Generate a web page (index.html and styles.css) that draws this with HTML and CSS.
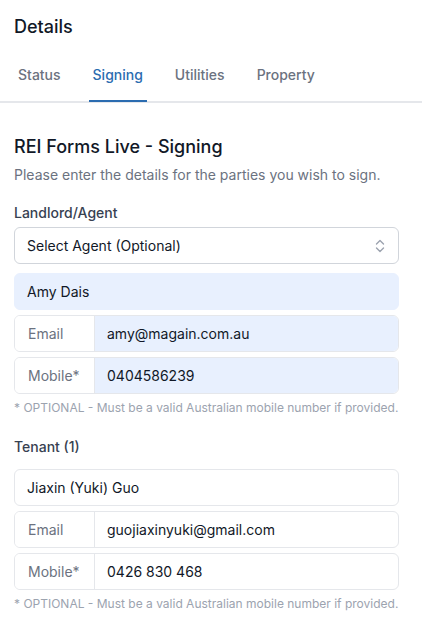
FILE: index.html
```html
<!DOCTYPE html>
<html>
<head>
<meta charset="utf-8">
<link rel="stylesheet" href="styles.css">
</head>
<body>
<div class="panel">
  <div class="top">
    <h1 class="title">Details</h1>
  </div>
  <nav class="tabs">
    <span class="tab">Status</span>
    <span class="tab active">Signing</span>
    <span class="tab">Utilities</span>
    <span class="tab">Property</span>
  </nav>
  <section class="content">
    <h2 class="heading">REI Forms Live - Signing</h2>
    <p class="intro">Please enter the details for the parties you wish to sign.</p>

    <div class="group">
      <div class="label">Landlord/Agent</div>
      <div class="select">
        <span>Select Agent (Optional)</span>
        <svg class="chev" width="10" height="14" viewBox="0 0 10 14"><path d="M1.5 5 L5 1.5 L8.5 5 M1.5 9 L5 12.5 L8.5 9" fill="none" stroke="#9ca3af" stroke-width="1.4" stroke-linecap="round" stroke-linejoin="round"/></svg>
      </div>
      <div class="field filled">Amy Dais</div>
      <div class="row">
        <span class="addon">Email</span>
        <span class="value filled">amy@magain.com.au</span>
      </div>
      <div class="row">
        <span class="addon">Mobile*</span>
        <span class="value filled">0404586239</span>
      </div>
      <p class="help">* OPTIONAL - Must be a valid Australian mobile number if provided.</p>
    </div>

    <div class="group tenant">
      <div class="label">Tenant (1)</div>
      <div class="field">Jiaxin (Yuki) Guo</div>
      <div class="row">
        <span class="addon">Email</span>
        <span class="value">guojiaxinyuki@gmail.com</span>
      </div>
      <div class="row">
        <span class="addon">Mobile*</span>
        <span class="value">0426 830 468</span>
      </div>
      <p class="help">* OPTIONAL - Must be a valid Australian mobile number if provided.</p>
    </div>
  </section>
</div>
</body>
</html>
```

FILE: styles.css
```css
* { box-sizing: border-box; }
html, body { margin: 0; padding: 0; background: #fff; }
body {
  font-family: Inter, "Noto Sans", "Liberation Sans", sans-serif;
  color: #111827;
  width: 422px;
  height: 631px;
  overflow: hidden;
}
.top { padding: 15px 23px 0 14px; }
.title {
  margin: 0;
  font-size: 18px;
  font-weight: 500;
  line-height: 24px;
  color: #111827;
}
.tabs {
  display: flex;
  gap: 24px;
  padding: 0 14px;
  margin-top: 24px;
  border-bottom: 2px solid #e5e7eb;
}
.tab {
  padding: 0 4px;
  font-size: 14px;
  line-height: 24px;
  height: 39px;
  color: #6b7280;
  font-weight: 500;
  border-bottom: 2px solid transparent;
  margin-bottom: -1px;
}
.tab.active {
  color: #2b6cb0;
  border-bottom-color: #2b6cb0;
}
.content { padding: 32px 23px 0 14px; }
.heading {
  margin: 0;
  font-size: 18px;
  font-weight: 500;
  line-height: 24px;
  color: #111827;
}
.intro {
  margin: 6px 0 0;
  font-size: 14px;
  line-height: 20px;
  color: #6b7280;
}
.group { margin-top: 19px; display: flex; flex-direction: column; gap: 5px; }
.group.tenant { margin-top: 22px; }
.label {
  font-size: 14px;
  font-weight: 500;
  line-height: 18px;
  color: #374151;
}
.tenant .label { margin-bottom: 8px; }
.select, .field, .row {
  height: 37px;
  border: 1px solid #e5e7eb;
  border-radius: 6px;
  font-size: 14px;
  color: #111827;
}
.select {
  display: flex;
  align-items: center;
  justify-content: space-between;
  padding: 0 12px;
  border-color: #d1d5db;
  margin-bottom: 4px;
}
.chev { margin-right: 1px; }
.field {
  display: flex;
  align-items: center;
  padding: 0 12px;
}
.field.filled { background: #e8f0fe; border-color: #e8f0fe; }
.row {
  display: flex;
  overflow: hidden;
}
.addon {
  width: 80px;
  flex: none;
  display: flex;
  align-items: center;
  padding-left: 13px;
  color: #6b7280;
  border-right: 1px solid #e5e7eb;
  background: #fff;
}
.value {
  flex: 1;
  display: flex;
  align-items: center;
  padding-left: 12px;
}
.value.filled { background: #e8f0fe; }
.help {
  margin: 1px 0 0;
  font-size: 12px;
  line-height: 16px;
  color: #9ca3af;
}
```
